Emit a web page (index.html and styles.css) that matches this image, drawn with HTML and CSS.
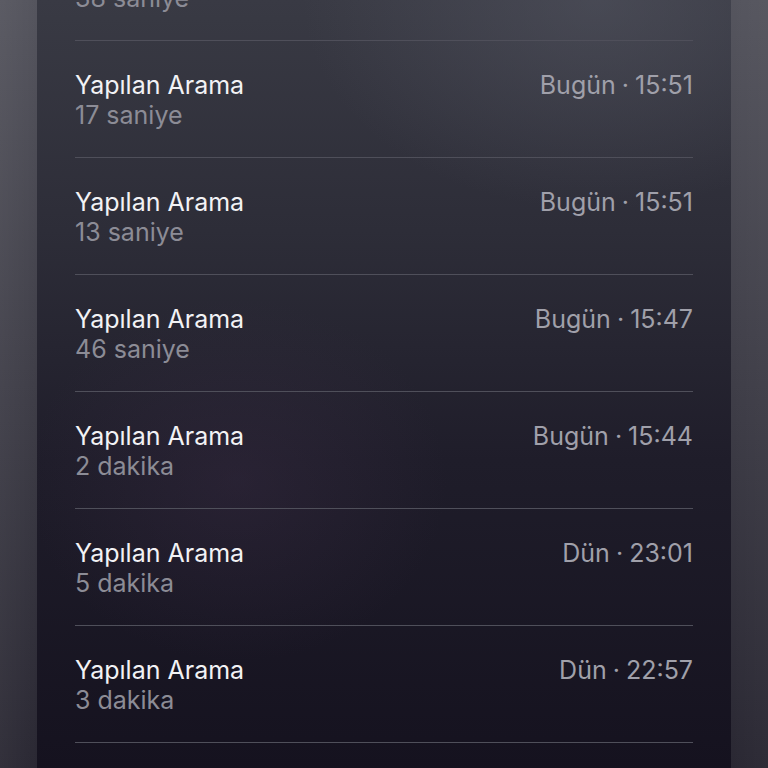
FILE: index.html
```html
<!DOCTYPE html>
<html lang="tr">
<head>
<meta charset="utf-8">
<link rel="stylesheet" href="styles.css">
</head>
<body>
<div class="screen">
  <div class="panel">
    <ul class="list">
      <li class="row first">
        <div class="info"><span class="title">Yapılan Arama</span><span class="sub">38 saniye</span></div>
        <span class="time">Bugün · 15:52</span>
      </li>
      <li class="row">
        <div class="info"><span class="title">Yapılan Arama</span><span class="sub">17 saniye</span></div>
        <span class="time">Bugün · 15:51</span>
      </li>
      <li class="row">
        <div class="info"><span class="title">Yapılan Arama</span><span class="sub">13 saniye</span></div>
        <span class="time">Bugün · 15:51</span>
      </li>
      <li class="row">
        <div class="info"><span class="title">Yapılan Arama</span><span class="sub">46 saniye</span></div>
        <span class="time">Bugün · 15:47</span>
      </li>
      <li class="row">
        <div class="info"><span class="title">Yapılan Arama</span><span class="sub">2 dakika</span></div>
        <span class="time">Bugün · 15:44</span>
      </li>
      <li class="row">
        <div class="info"><span class="title">Yapılan Arama</span><span class="sub">5 dakika</span></div>
        <span class="time">Dün · 23:01</span>
      </li>
      <li class="row">
        <div class="info"><span class="title">Yapılan Arama</span><span class="sub">3 dakika</span></div>
        <span class="time">Dün · 22:57</span>
      </li>
      <li class="row">
        <div class="info"><span class="title">Yapılan Arama</span><span class="sub">1 dakika</span></div>
        <span class="time">Dün · 22:40</span>
      </li>
    </ul>
  </div>
</div>
</body>
</html>
```
FILE: styles.css
```css
* { box-sizing: border-box; }
html, body { margin: 0; padding: 0; }
body {
  width: 768px;
  height: 768px;
  overflow: hidden;
  font-family: Inter, "Noto Sans", sans-serif;
  background: #3e3d47;
}
.screen {
  height: 768px;
  display: flex;
  justify-content: center;
  background:
    linear-gradient(90deg, rgba(255,255,255,0.04) 0px, transparent 37px, transparent 731px, rgba(255,255,255,0.02) 768px),
    linear-gradient(180deg, #55555e 0%, #3f3e48 50%, #2a2833 100%);
}
.panel {
  width: 694px;
  height: 768px;
  overflow: hidden;
  padding: 0 38px;
  background:
    radial-gradient(ellipse 300px 260px at 200px 480px, rgba(60, 45, 70, 0.35), transparent 70%),
    radial-gradient(ellipse 420px 300px at 560px 0px, rgba(90, 92, 104, 0.45), transparent 70%),
    linear-gradient(180deg, #393a44 0%, #2d2d38 30%, #1f1d2a 60%, #15121f 100%);
}
.list {
  list-style: none;
  margin: -77px 0 0;
  padding: 0;
}
.row {
  height: 117px;
  border-top: 1.5px solid #4f4f5a;
  display: flex;
  justify-content: space-between;
  align-items: flex-start;
  padding-top: 29px;
}
.row.first { border-top: none; padding-top: 30px; }
.info { display: flex; flex-direction: column; }
.title, .sub, .time {
  font-size: 25px;
  line-height: 30px;
}
.title { color: #f2f2f5; }
.sub { color: #8c8c96; }
.time { color: #a0a0aa; word-spacing: -1px; }
```
